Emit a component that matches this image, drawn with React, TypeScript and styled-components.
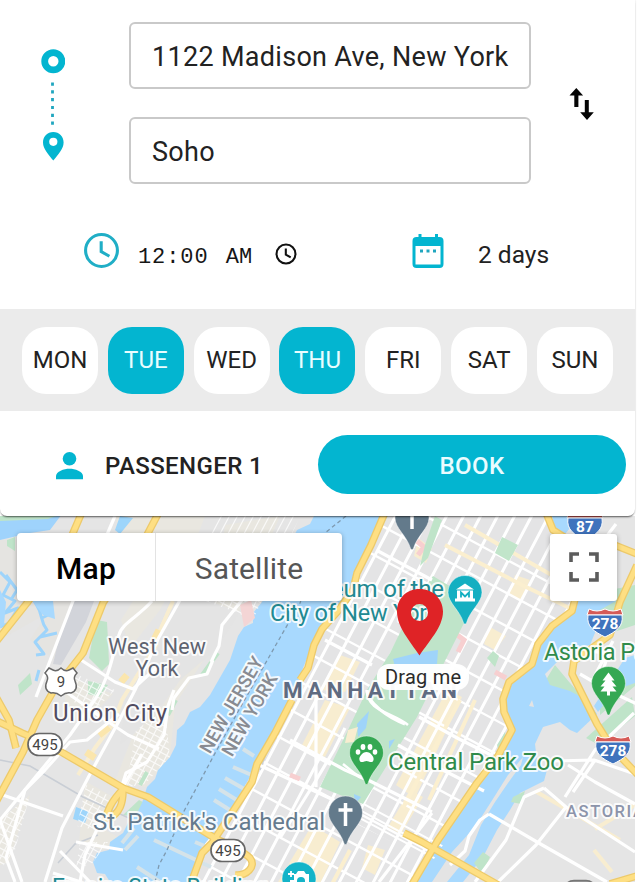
import React from "react";
import styled, { createGlobalStyle } from "styled-components";

const TEAL = "#03b5d0";

const GlobalStyle = createGlobalStyle`
  * { box-sizing: border-box; }
  body { margin: 0; background: #fff; font-family: Roboto, "Open Sans", sans-serif; overflow: hidden; }
  button { font: inherit; border: 0; padding: 0; margin: 0; cursor: pointer; }
`;

const Page = styled.main`
  width: 635px;
  height: 882px;
  display: flex;
  flex-direction: column;
`;

const BookingCard = styled.section`
  position: relative;
  z-index: 1;
  height: 516px;
  flex: none;
  display: flex;
  flex-direction: column;
  background: #fff;
  border-radius: 0 0 7px 7px;
  box-shadow: 0 2px 2px -1px rgba(0, 0, 0, 0.6), 0 0 2px rgba(0, 0, 0, 0.16);
`;

const Route = styled.div`
  height: 206px;
  padding-top: 22px;
  display: grid;
  grid-template-columns: 129px 402px 1fr;
`;

const RouteMarks = styled.div`
  padding: 27px 0 0 41px;
`;

const Fields = styled.div`
  display: flex;
  flex-direction: column;
  gap: 28px;
`;

const Field = styled.input`
  width: 402px;
  height: 67px;
  padding: 3px 0 0 21px;
  border: 2px solid #c9c9c9;
  border-radius: 6px;
  outline: none;
  background: #fff;
  color: #222;
  font: 400 27px Roboto, sans-serif;
  letter-spacing: 0.3px;
`;

const SwapButton = styled.button`
  justify-self: start;
  align-self: start;
  margin: 64px 0 0 36px;
  width: 30px;
  height: 36px;
  background: none;
`;

const Schedule = styled.div`
  height: 103px;
  display: grid;
  grid-template-columns: 411px 1fr;
`;

const Entry = styled.div<{ $inset: number }>`
  display: flex;
  align-items: flex-start;
  padding: 26px 0 0 ${(p) => p.$inset}px;
`;

const TimeText = styled.span`
  margin: 13px 0 0 18px;
  width: 118px;
  color: #161616;
  white-space: pre;
  font: 400 22px/26px "Liberation Mono", monospace;
  letter-spacing: 0.9px;
`;

const Meridiem = styled.span`
  margin-left: 3px;
  letter-spacing: 0.2px;
`;

const SmallClock = styled.span`
  display: flex;
  margin: 11px 0 0 19px;
`;

const CalendarMark = styled.span`
  display: flex;
  margin-top: 2px;
`;

const DaysText = styled.span`
  margin: 9px 0 0 33px;
  color: #222;
  font-size: 24.5px;
  line-height: 28px;
`;

const WeekBar = styled.div`
  height: 102px;
  padding: 18px 22px;
  display: flex;
  justify-content: space-between;
  background: #ebebeb;
`;

const Day = styled.button<{ $active: boolean }>`
  width: 76px;
  height: 67px;
  padding-bottom: 1px;
  border-radius: 24px;
  background: ${(p) => (p.$active ? TEAL : "#fff")};
  color: ${(p) => (p.$active ? "#e9fdff" : "#222")};
  font-size: 24px;
`;

const Footer = styled.div`
  flex: 1;
  display: flex;
  align-items: flex-start;
  padding: 24px 9px 0 54px;
`;

const Passenger = styled.div`
  width: 264px;
  height: 60px;
  padding-top: 1px;
  display: flex;
  align-items: center;
  gap: 20px;
  color: #222;
  font-weight: 500;
  font-size: 24px;
  letter-spacing: 0.4px;
`;

const BookButton = styled.button`
  width: 308px;
  height: 59px;
  padding-top: 2px;
  border-radius: 30px;
  background: ${TEAL};
  color: #eafcff;
  font-weight: 500;
  font-size: 24px;
  letter-spacing: 0.4px;
`;

const MapArea = styled.section`
  height: 366px;
  display: grid;
  overflow: hidden;
`;

const MapCanvas = styled.svg`
  grid-area: 1 / 1;
  display: block;
  font-family: Roboto, sans-serif;
`;

const MapControls = styled.div`
  grid-area: 1 / 1;
  position: relative;
  align-self: start;
  display: flex;
  justify-content: space-between;
  padding: 17px 18px 0 17px;
`;

const TypeSwitch = styled.div`
  display: flex;
  height: 68px;
  border-radius: 4px;
  background: #fff;
  box-shadow: 0 1px 5px rgba(0, 0, 0, 0.3);
`;

const TypeButton = styled.button<{ $active: boolean }>`
  width: ${(p) => (p.$active ? 138 : 187)}px;
  padding-top: 2px;
  background: none;
  border-left: ${(p) => (p.$active ? "0" : "1px solid #e3e3e3")};
  color: ${(p) => (p.$active ? "#000" : "#565656")};
  font-weight: ${(p) => (p.$active ? 500 : 400)};
  font-size: 30px;
  letter-spacing: ${(p) => (p.$active ? 0.3 : 0.1)}px;
`;

const FullscreenButton = styled.button`
  width: 67px;
  height: 67px;
  margin-top: 1px;
  padding-bottom: 2px;
  display: grid;
  place-items: center;
  border-radius: 3px;
  background: #fff;
  box-shadow: 0 1px 5px rgba(0, 0, 0, 0.3);
`;

const RouteIcon = () => (
  <svg width="24" height="112" viewBox="0 0 24 112">
    <circle cx="12.3" cy="12.3" r="8.6" fill="none" stroke={TEAL} strokeWidth="6.8" />
    <path d="M11.500 33.500V76" stroke="#20a6bf" strokeWidth="2.800" strokeDasharray="3.200 4.600" />
    <path
      d="M12.300 83C6.400 83 2 87.600 2 93.400c0 6.400 5.800 12.400 10.300 18 4.500-5.600 10.300-11.600 10.300-18C22.600 87.600 18.200 83 12.300 83z"
      fill={TEAL}
    />
    <circle cx="12.300" cy="92.800" r="4.100" fill="#fff" />
  </svg>
);

const SwapIcon = () => (
  <svg width="30" height="36" viewBox="0 0 30 36">
    <path d="M2.500 9.500 9.300 2l6.800 7.500h-4.700V21H7.300V9.500zM17.800 14h4v12.300h5L20 34l-6.800-7.700h4.600z" fill="#050505" />
  </svg>
);

const ClockIcon = ({ size, color, weight }: { size: number; color: string; weight: number }) => (
  <svg width={size} height={size} viewBox="0 0 36 36" fill="none" stroke={color} strokeWidth={weight}>
    <circle cx="18" cy="18" r="15.500" />
    <path d="M17.700 9v10l8 4.600" />
  </svg>
);

const CalendarIcon = () => (
  <svg width="34" height="36" viewBox="0 0 34 36" fill={TEAL}>
    <path d="M7.500 0h3v3H24V0h3v3h1.500a4 4 0 0 1 4 4v23a4 4 0 0 1-4 4h-23a4 4 0 0 1-4-4V7a4 4 0 0 1 4-4h2zM4.500 12v18.500h25V12z" />
    <path d="M9 15.500h3v3H9zM15.500 15.500h3v3h-3zM22 15.500h3v3h-3z" fill="#20a6bf" />
  </svg>
);

const PersonIcon = () => (
  <svg width="31" height="30" viewBox="0 0 31 30" fill={TEAL}>
    <circle cx="15.500" cy="7.800" r="6.800" />
    <path d="M2 28.300v-3.200c0-4.700 8-7.300 13.500-7.300S29 20.400 29 25.100v3.200z" />
  </svg>
);

const FullscreenIcon = () => (
  <svg width="32" height="32" viewBox="0 0 32 32" fill="none" stroke="#5c5c5c" strokeWidth="3.600">
    <path d="M11 3H3v8M21 3h8v8M29 21v8h-8M11 29H3v-8" />
  </svg>
);

/** Parallel lines with a fixed direction, spaced along the x axis. */
const hatch = (from: number, to: number, step: number, y: number, dx: number, dy: number) => {
  let d = "";
  for (let x = from; x <= to; x += step) d += `M${x - dx} ${y - dy}L${x + dx} ${y + dy}`;
  return d;
};

const AVENUES = hatch(180, 660, 17, 700, 210, -400);
const STREETS = hatch(-100, 780, 62, 700, 700, 376);
const MIDTOWN_STREETS = hatch(-100, 780, 15, 700, 700, 376);
const NJ_STREETS = hatch(-100, 400, 8, 700, 180, -340);
const NJ_CROSS = hatch(-300, 500, 13, 700, 500, 270);

const MANHATTAN =
  "M388 516 356 574 350 595 320 627 302 675 257 764 230 813 200 850 188 882H412L440 840 480 780 498 757 511 733 502 705 506 684 530 667 539 640 573 608V575L550 530 546 516z";
const HUDSON =
  "M314 516 310 524 297 530 293 538 262 602 253 613 253 623 244 627 238 636 230 660 210 695 200 707 190 712 184 724 177 730 176 745 170 757 158 770 155 779 147 787 142 803 137 813 128 823 123 833 110 842 109 850 97 853 93 862 97 873 105 874 110 882H188L200 850 210 837 230 813 247 783 257 763 273 733 300 677 303 668 320 627 343 600 350 590 356 573 388 516z";
const EAST_RIVER =
  "M575 601 570 613 550 628 540 643 533 666 509 683 504 700 512 733 500 757 479 785 438 842 415 882H463L483 857 497 830 510 810 520 793 544 781 547 770 537 761 535 744 543 727 560 722 570 730 577 733 597 714 588 701 570 691 550 685 545 674 560 659 572 650 590 645 597 628 591 615 616 601z";

const PARKWAYS = [
  "M386 510 371 545 357 573 353 590 338 611 322 629 314 645 308 668 300 680",
  "M292 700 275 733 257 764 252 782 235 808 212 843 202 853 190 886",
  "M82 512 70 540 27 603-4 642",
  "M159 512 147 535 103 603 83 653 54 690 37 720 23 752-4 802",
  "M-5 720 22 733 36 739 63 753 123 788 148 797 213 837",
  "M576 595 572 611 552 626 538 644 532 664 509 682 503 699 504 712 512 730 498 756 477 783 438 840 410 888",
  "M545 510 553 530 575 544M602 540 637 554M637 565 620 602 610 635 574 661 572 674 583 696 597 724 612 748 640 777",
  "M404 833 422 842 500 886M610 884 640 875M212 837C225 843 242 850 250 858 257 867 246 876 235 875M123 789C111 802 108 809 105 821M123 790C123 804 120 812 109 819",
  "M-5 695 9 720 16 748",
];

const LOCAL_ROADS = [
  "M115 516 100 551 73 601 36 697M152 601C138 617 121 624 119 635 112 655 111 674 96 698L70 735 0 820M180 600 158 639 135 690 119 721 89 776 62 828 45 882",
  "M78 658 115 682 133 689 157 667M58 686 98 715 128 735 159 749M119 714 87 740 70 742 45 770 25 790 6 858 15 882",
  "M174 690 168 706 164 735 147 762 126 773 121 789 101 821 85 855 80 882M142 754 124 785 98 829",
  "M63 816 0 794M0 820 22 882M53 873 81 882M76 842 123 850M60 851 90 882",
  "M213 660 207 674 189 678 174 698 172 710M249 570 242 600 222 625 219 646 211 662",
  "M420 843 490 880M489 814 537 842 607 882M489 814 480 820 469 836 465 851 450 865M544 788 566 807 635 852M566 807 536 845 498 882M544 788 524 797 506 840 475 882M553 761 594 760 635 774M568 765 595 782 635 804M595 760 573 792M634 713 595 750 565 797",
  "M607 690 637 704M580 674 592 681 613 641M585 650 608 654 602 674M586 514 577 541M616 524 600 545",
  "M290 740 345 770 370 781 432 812M257 764 342 804M345 728 334 750 312 787 280 838M367 690C367 703 389 718 405 724",
  "M432 813 379 882M398 745 433 765 484 791M419 717 459 739 491 755M316 690V787M378 551 432 580M325 640 372 665",
];

const Shield = ({ x, y, label }: { x: number; y: number; label: string }) => (
  <g transform={`translate(${x} ${y})`}>
    <path d="M-16-13Q-8-9 0-13 8-9 16-13L18-7H-18z" fill="#d65b57" stroke="#fff" strokeWidth="1" />
    <path d="M-17-7H17C19 5 10 10 0 15-10 10-19 5-17-7z" fill="#3f73bd" stroke="#fff" strokeWidth="1" />
    <text y="7" textAnchor="middle" fontSize="15.500" fontWeight="700" fill="#fff">{label}</text>
  </g>
);

const RouteBadge = ({ x, y }: { x: number; y: number }) => (
  <g transform={`translate(${x} ${y})`}>
    <rect x="-17" y="-11" width="34" height="22" rx="11" fill="#fff" stroke="#666" strokeWidth="1.700" />
    <text y="5" textAnchor="middle" fontSize="15" fill="#444">495</text>
  </g>
);

const Pin = ({ x, y, color, children }: { x: number; y: number; color: string; children?: React.ReactNode }) => (
  <g transform={`translate(${x} ${y})`}>
    <path
      d="M0-17C-9.500-17-17-9.500-17 0-17 10-5 18-1.600 30-1 32 1 32 1.600 30 5 18 17 10 17 0 17-9.500 9.500-17 0-17z"
      fill={color}
      stroke="#ffffff"
      strokeOpacity=".45"
    />
    {children}
  </g>
);

type LabelProps = {
  x: number;
  y: number;
  width: number;
  size: number;
  color: string;
  weight?: number;
  anchor?: "start" | "middle" | "end";
  children: string;
};

const Label = ({ x, y, width, size, color, weight = 400, anchor = "start", children }: LabelProps) => (
  <text
    x={x}
    y={y}
    textLength={width}
    fontSize={size}
    fontWeight={weight}
    fill={color}
    textAnchor={anchor}
    stroke="#fff"
    strokeOpacity=".85"
    strokeWidth="4"
    strokeLinejoin="round"
    paintOrder="stroke"
  >
    {children}
  </text>
);

const CityMap = () => (
  <MapCanvas width="635" height="366" viewBox="0 516 635 366">
    <defs>
      <clipPath id="manhattan"><path d={MANHATTAN} /></clipPath>
      <clipPath id="midtown"><path d="M363 800 445 842 432 862 345 818z" /></clipPath>
      <clipPath id="jersey">
        <path d="M215 516H300L253 620 235 612 190 595 200 560zM136 730 165 710 170 757 145 784 124 788 130 765zM86 785 112 797 95 830 77 826zM0 820 30 795 15 850 0 870zM70 672 115 690 93 712 70 700zM80 842 108 842 91 865 76 868z" />
      </clipPath>
      <filter id="soft" x="-5%" y="-5%" width="110%" height="110%"><feGaussianBlur stdDeviation=".6" /></filter>
    </defs>
    <g filter="url(#soft)">
      <path d="M0 510H640V890H0z" fill="#e5e5e5" />
      <path d="M115 516H205L195 542 160 610 130 648 121 620 140 590zM225 525 280 516 240 610 210 650 175 705 170 757 145 787 115 781 133 735 162 706 180 680 208 650zM64 675 113 694 84 724 66 714zM85 781 115 798 105 830 120 838 103 850 79 842zM0 820 30 795 9 862 0 865z" fill="#e9e7e0" />
      <path d="M170 602H212L240 612 215 650 180 680 160 706 120 745 125 700 150 650z" fill="#e4e4e4" />
      <path d="M0 540H62V605L0 640zM55 601H80L55 660 30 640z" fill="#e5e4e1" />
      <path d="M72 601 94 601 86 622 61 665 53 664 61 630z" fill="#d2d4da" />

      <path d="M0 514H62L50 530 30 533 0 540z" fill="#9fd3fc" />
      <path d="M0 514H62L48 519 0 521zM7 540 15 537V551L7 546zM97 620 107 622 108 640 109 664 102 671 89 658 92 641zM18 685 30 673 32 684 20 695zM88 681 108 685 99 697 88 694zM139 800 154 808 137 817 123 815zM610 590 635 585V625L605 635 590 613zM600 690 635 665V686L600 715zM544 683 555 665 570 683 585 700 578 704zM586 738 632 697 635 716 599 745zM498 557 507 536 518 541 509 560zM540 618 553 622 541 637zM394 522 387 535 373 557 359 582 353 574 377 533 385 516z" fill="#bfe4c9" />
      <path d={HUDSON} fill="#a8d9fe" />
      <path d={EAST_RIVER} fill="#a8d9fe" />
      <path d="M552 516H580L565 534 555 530zM625 658 635 655V683L615 690 598 712 594 706z" fill="#a8d9fe" />
      <path d="M120 516 133 518 120 534 115 530zM76 807 89 812 85 823 73 819z" fill="#9dd5fb" />
      <path d="M0 572 10 582 3 595 15 601 5 613 18 608 9 623 0 627M6 575 17 590 12 598M35 602C45 618 39 620 47 630L35 642 44 654 36 655M41 604 52 613 42 618M40 637 57 633M39 670 36 681" fill="none" stroke="#9ed4fb" strokeWidth="3" strokeLinejoin="round" />
      <path d="M0 590 6 602 4 625 0 628zM32 601 53 601 55 619 43 615z" fill="#a8d9fe" />

      <path d={MANHATTAN} fill="#e4e4e5" />
      <g clipPath="url(#manhattan)">
        <path d="M325 700 350 708 325 757 302 745zM340 655 360 662 345 692 322 690zM312 825 340 842 321 882 278 882zM418 538 432 548 426 563 414 556zM515 575 530 580 520 601 509 595zM490 627 506 636 495 650 484 644zM447 690 462 697 415 798 396 785zM368 845 385 850 375 875 362 868zM410 790 423 797 401 834 388 827z" fill="#f8edd0" />
        <path d={AVENUES} stroke="#fff" strokeWidth="3" />
        <path d={STREETS} stroke="#fff" strokeWidth="2.400" />
        <path d="M445 545 522 585 580 613M465 525 555 577M460 700 403 808M475 700 429 800M350 850 330 888" stroke="#fbefcf" strokeWidth="4" fill="none" />
        <path d="M417 541 424 547 418 555M456 634 464 640 458 652M495 672 506 678M290 775 300 779" fill="none" stroke="#f7cfd0" strokeWidth="5" />
        <path d="M487 658 493 651 499 656 495 667z" fill="#bfe4c9" />
        <path d="M435 516 442 520 428 558 420 566 425 545z" fill="#bfe4c9" />
      </g>
      <g clipPath="url(#midtown)"><path d={MIDTOWN_STREETS} stroke="#fff" strokeWidth="2" /></g>

      <path d="M433 576 466 596 465 621 417 717 363 804 320 787 348 730 367 690 390 653 415 602z" fill="#bfe4c9" />
      <path d="M502 537 518 545 509 561 495 553z" fill="#c1e5ca" />
      <path d="M393 659 417 653 438 650 437 664 421 676 396 671zM357 724 369 711 366 728 358 737zM389 741 395 739 389 749zM354 794 361 797 355 804z" fill="#9fd4fa" />
      <path d="M348 730 358 727 354 742 345 743z" fill="#f8edd0" />
      <g fill="none" stroke="#fff" strokeWidth="2.500"><path d="M367 690C366 711 394 713 408 725M343 764 359 777 370 781" /></g>

      <g clipPath="url(#jersey)" fill="none" stroke="#fff" strokeWidth="1.200" opacity=".75"><path d={NJ_STREETS} /><path d={NJ_CROSS} /></g>
      <path d="M173 601 157 637M157 644 122 700 113 724 95 748 78 775M635 805 595 829M535 791 620 840M594 850 612 872" stroke="#f8edd0" strokeWidth="4" fill="none" />
      <path d="M121 682 127 675M99 735 109 727M86 752 95 758M154 640 159 630" stroke="#fbe6ad" strokeWidth="7" />
      <path d="M240 605 251 600 255 618 244 627zM240 638 248 629" fill="#f4d5d5" />
      <path d="M0 760 30 766 83 797 155 830M58 863 75 844 98 835M275 730 260 770" fill="none" stroke="#c9ced5" strokeWidth="1.500" />
      <path d="M202 675 218 653M140 785 147 772M168 715 176 700" stroke="#bfe4c9" strokeWidth="4" />

      <path d="M523 757 508 775 491 802 475 827 452 852 432 882H447L469 855 481 825 495 802 508 783 521 765z" fill="#e4e4e4" />
      <path d="M529 706l3-6 2 7z" fill="#e4e4e4" />
      <path d="M474 863 483 852 490 857 482 874zM513 797 525 791 521 804 511 802zM497 745 505 732 506 745 500 755z" fill="#bfe4c9" />
      <path d="M160 882 137 867M154 840 211 867M243 749 254 756M233 767 254 776M225 778 246 790M219 789 240 802M214 800 233 812M195 842 207 847M122 843 134 828M125 850 138 836" stroke="#d5e3e9" strokeWidth="4" fill="none" />

      {LOCAL_ROADS.map((d) => <path key={d} d={d} fill="none" stroke="#fff" strokeWidth="3.200" strokeLinejoin="round" />)}
      {PARKWAYS.map((d) => <path key={d} d={d} fill="none" stroke="#edca6b" strokeWidth="7.600" strokeLinejoin="round" />)}
      {PARKWAYS.map((d) => <path key={`${d}-fill`} d={d} fill="none" stroke="#fedf83" strokeWidth="5" strokeLinejoin="round" />)}
      <path d="M346 516 325 533 300 603 277 643 240 708 213 757 183 813 167 850 159 865 155 882" fill="none" stroke="#7e9ab0" strokeWidth="1.300" strokeDasharray="4 3" />
    </g>

    <Label x={157} y={654} width={98} size={21.500} color="#5e6370" anchor="middle">West New</Label>
    <Label x={157} y={676} width={43} size={21.500} color="#5e6370" anchor="middle">York</Label>
    <Label x={53} y={721} width={114} size={24} color="#514b60">Union City</Label>
    <g transform="translate(237 708) rotate(-60)"><Label x={0} y={0} width={108} size={18.500} weight={500} color="#888b92" anchor="middle">NEW JERSEY</Label></g>
    <g transform="translate(255 718) rotate(-60)"><Label x={0} y={0} width={92} size={18.500} weight={500} color="#888b92" anchor="middle">NEW YORK</Label></g>
    <Label x={444} y={597} width={159} size={24} color="#218992" anchor="end">Museum of the</Label>
    <Label x={270} y={621} width={169} size={23.500} color="#218992">City of New York</Label>
    <Label x={283} y={698} width={174} size={22.500} weight={700} color="#5f6b81">MANHATTAN</Label>
    <Label x={388} y={770} width={176} size={24} color="#308b4b">Central Park Zoo</Label>
    <Label x={544} y={660} width={122} size={23.500} color="#308b4b">Astoria Park</Label>
    <Label x={566} y={817} width={78} size={16.500} weight={500} color="#8c94aa">ASTORIA</Label>
    <Label x={93} y={830} width={232} size={24} color="#657b8e">St. Patrick's Cathedral</Label>
    <Label x={52} y={895} width={216} size={23} color="#218992">Empire State Building</Label>

    <g transform="translate(61 681)">
      <path d="M-12-13-8-11Q-4-9 0-13 4-9 8-11L12-13 16-8Q12-4 14 0 18 9 10 12 5 11 0 15-5 11-10 12-18 9-14 0-12-4-16-8z" fill="#fff" stroke="#686868" strokeWidth="1.500" />
      <text y="6" textAnchor="middle" fontSize="15" fill="#444">9</text>
    </g>
    <RouteBadge x={45} y={744.500} />
    <RouteBadge x={228} y={850.500} />
    <rect x="564" y="880.500" width="32" height="20" rx="10" fill="#999" stroke="#777" strokeWidth="1.700" />
    <Shield x={585} y={525} label="87" />
    <Shield x={605} y={622} label="278" />
    <Shield x={613} y={749} label="278" />

    <Pin x={412} y={518} color="#637a8b"><path d="M0-8V11" stroke="#fff" strokeWidth="3.500" /></Pin>
    <Pin x={345.500} y={813} color="#637a8b"><path d="M0-10V13M-7-3H7" stroke="#fff" strokeWidth="3.500" /></Pin>
    <Pin x={465} y={592.500} color="#14afc1">
      <path d="M-9-3 0-9 9-3ZM-8-2H8V6H-8zM-10 6H10V9H-10z" fill="#fff" />
      <path d="M-4 5V0L0 4 4 0V5" fill="none" stroke="#14afc1" strokeWidth="1.800" />
    </Pin>
    <Pin x={366.500} y={753} color="#35a853">
      <g fill="#fff"><ellipse cx="-8.500" cy="-1" rx="2.300" ry="2.800" /><ellipse cx="-3.500" cy="-6" rx="2.400" ry="3" /><ellipse cx="3.500" cy="-6" rx="2.400" ry="3" /><ellipse cx="8.500" cy="-1" rx="2.300" ry="2.800" /><path d="M0-1C4-1 8 4 7 7 6 11 2 8 0 8-2 8-6 11-7 7-8 4-4-1 0-1z" /></g>
    </Pin>
    <Pin x={608.500} y={683.500} color="#35a853"><path d="M0-11 6-3H3L8 3H4L8 8H1.500V12H-1.500V8H-8L-4 3H-8L-3-3H-6z" fill="#fff" /></Pin>
    <Pin x={299} y={879} color="#14b4c8">
      <path d="M-5-5H-3L-1-8H5L7-5H10V8H-9V1H-5z" fill="#fff" /><circle cx="2" cy="2" r="4" fill="#14b4c8" />
      <path d="M-8-8V-2M-11-5H-5" stroke="#fff" strokeWidth="1.800" />
    </Pin>

    <path
      fillRule="evenodd"
      d="M419.500 589C406 589 397 599 397 611.500 397 627 410 641 419.500 655.500 429 641 443 627 443 611.500 443 599 433 589 419.500 589zM419.500 604a8.500 8.500 0 1 1 0 17 8.500 8.500 0 1 1 0-17z"
      fill="#df2326"
    />
    <rect x="377" y="664" width="92" height="26" rx="12" fill="#fff" fillOpacity=".96" />
    <text x="385" y="684" textLength="76" fontSize="20" fill="#2b2b2b">Drag me</text>
  </MapCanvas>
);

const DAYS = ["MON", "TUE", "WED", "THU", "FRI", "SAT", "SUN"];
const ACTIVE_DAYS = ["TUE", "THU"];

export default function App() {
  return (
    <>
      <GlobalStyle />
      <Page>
        <BookingCard>
          <Route>
            <RouteMarks><RouteIcon /></RouteMarks>
            <Fields>
              <Field aria-label="From" defaultValue="1122 Madison Ave, New York" />
              <Field aria-label="To" defaultValue="Soho" />
            </Fields>
            <SwapButton aria-label="Swap"><SwapIcon /></SwapButton>
          </Route>
          <Schedule>
            <Entry $inset={83}>
              <ClockIcon size={37} color="#20aec6" weight={3} />
              <TimeText>12:00 <Meridiem>AM</Meridiem></TimeText>
              <SmallClock><ClockIcon size={22} color="#111" weight={3.4} /></SmallClock>
            </Entry>
            <Entry $inset={0}>
              <CalendarMark><CalendarIcon /></CalendarMark>
              <DaysText>2 days</DaysText>
            </Entry>
          </Schedule>
          <WeekBar>
            {DAYS.map((day) => (
              <Day key={day} $active={ACTIVE_DAYS.includes(day)}>{day}</Day>
            ))}
          </WeekBar>
          <Footer>
            <Passenger><PersonIcon />PASSENGER 1</Passenger>
            <BookButton>BOOK</BookButton>
          </Footer>
        </BookingCard>
        <MapArea>
          <CityMap />
          <MapControls>
            <TypeSwitch>
              <TypeButton $active>Map</TypeButton>
              <TypeButton $active={false}>Satellite</TypeButton>
            </TypeSwitch>
            <FullscreenButton aria-label="Fullscreen"><FullscreenIcon /></FullscreenButton>
          </MapControls>
        </MapArea>
      </Page>
    </>
  );
}
